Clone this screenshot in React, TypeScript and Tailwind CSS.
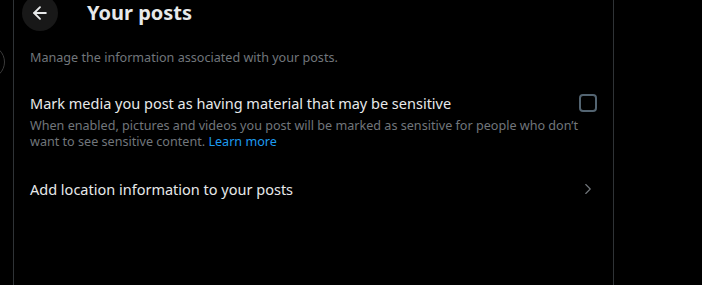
import { ArrowLeft, ChevronRight } from 'lucide-react';

export default function App() {
  return (
    <div className="relative h-[285px] w-[702px] overflow-hidden bg-black font-['Noto_Sans',sans-serif]">
      {/* cut-off nav button on the far left */}
      <div className="absolute left-[-29px] top-[45px] h-[34px] w-[34px] rounded-full border border-[#3a3a3a]" />
      <div className="ml-[13px] flex h-full w-[601px] flex-col border-x border-[#2f3336]">
        <div className="-mt-[14px] flex h-[53px] items-center px-[8px]">
          <div className="flex h-9 w-9 items-center justify-center rounded-full bg-[#181818]">
            <ArrowLeft className="h-5 w-5 text-[#e7e9ea]" strokeWidth={2.25} />
          </div>
          <h1 className="ml-[29px] text-[20px] font-bold text-[#e7e9ea]">Your posts</h1>
        </div>
        <p className="mt-[11px] px-4 text-[12.6px] leading-4 text-[#71767b]">
          Manage the information associated with your posts.
        </p>
        <div className="mt-[27px] px-4">
          <div className="flex items-center">
            <span className="flex-1 text-[14.5px] leading-5 text-[#e7e9ea]">
              Mark media you post as having material that may be sensitive
            </span>
            <div className="h-[18px] w-[18px] rounded-[4px] border-2 border-[#536471]" />
          </div>
          <div className="mt-[5px] text-[12.6px] leading-4 text-[#71767b]">
            When enabled, pictures and videos you post will be marked as sensitive for people who don’t want to see sensitive content.{' '}
            <span className="text-[#1d9bf0]">Learn more</span>
          </div>
        </div>
        <div className="mt-[29px] flex items-center px-4">
          <span className="flex-1 text-[14.5px] leading-5 text-[#e7e9ea]">Add location information to your posts</span>
          <ChevronRight className="h-[18px] w-[18px] text-[#71767b]" strokeWidth={1.5} />
        </div>
      </div>
    </div>
  );
}
